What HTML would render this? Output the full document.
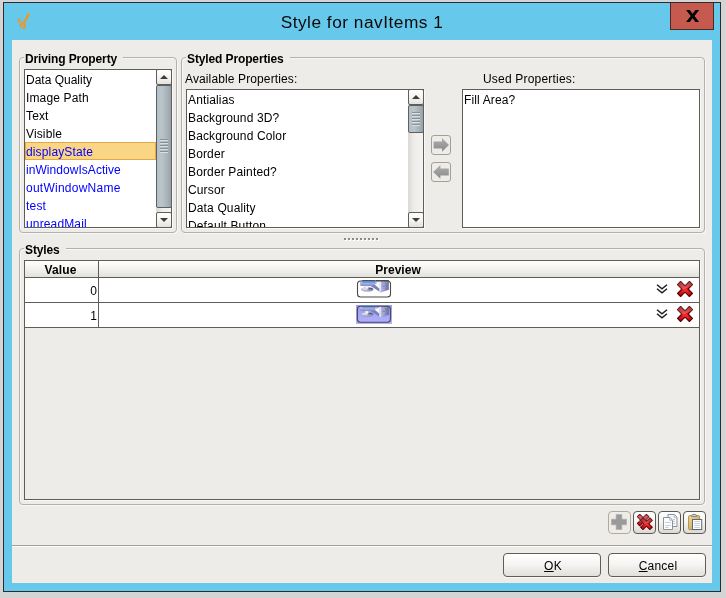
<!DOCTYPE html>
<html>
<head>
<meta charset="utf-8">
<title>Style for navItems 1</title>
<style>
html,body{margin:0;padding:0;}
body{width:726px;height:598px;background:#d4d4d4;position:relative;overflow:hidden;
  font-family:"Liberation Sans",sans-serif;font-size:12px;color:#000;}
div,svg{position:absolute;box-sizing:border-box;}
.it,.lbl,.gt,.btn,#title{will-change:transform;}
#win{left:3px;top:2px;width:718px;height:590px;background:#66c8ea;border:1px solid #2c2c2c;}
#title{left:4px;top:3px;width:716px;height:37px;text-align:center;font-size:17.3px;line-height:38px;letter-spacing:0.5px;color:#0a0a0a;white-space:nowrap;}
#close{left:670px;top:3px;width:44px;height:27px;background:#c65a4f;border:1px solid #4f2823;border-top:none;}
#content{left:12px;top:40px;width:700px;height:543px;background:#eeece8;}
.grp{border:1px solid #b3b1ac;border-radius:4px;box-shadow:inset 1px 1px 0 #f8f7f5, 1px 1px 0 #f8f7f5;}
.gt{font-weight:bold;background:#eeece8;white-space:nowrap;line-height:14px;height:14px;padding:0 6px 0 1px;letter-spacing:-0.12px;}
.list{background:#fff;border:1px solid #5f5d57;overflow:hidden;box-shadow:1px 1px 0 #faf9f7;}
.it{left:0;height:18px;line-height:20px;white-space:nowrap;padding-left:1px;overflow:hidden;letter-spacing:0.14px;}
.lbl{white-space:nowrap;line-height:14px;height:14px;letter-spacing:0.12px;}
.blue{color:#0000ff;}
.sb{background:linear-gradient(90deg,#dad8d3,#eeedea 40%,#f5f4f2);}
.sbtn{width:16px;height:16px;border:1px solid #5f5d57;border-radius:2px;background:linear-gradient(#ffffff,#f4f3f0 55%,#e4e2dd);}
.thumb{width:16px;border:1px solid #5d5f60;border-radius:2px;background:linear-gradient(90deg,#b4c0c7,#b9c4cb 35%,#a9b4ba 70%,#98a2a8);}
.btn{letter-spacing:0.2px;padding-left:2px;border:1px solid #5f5d57;border-radius:4px;background:linear-gradient(#ffffff,#f6f5f2 45%,#e3e0db);text-align:center;box-shadow:0 1px 0 #f8f7f5;}
.tb{width:23px;height:23px;border:1px solid #5a5853;border-radius:4px;background:linear-gradient(#ffffff,#f4f3f0 50%,#dcd9d3);}
.tbd{width:23px;height:23px;border:1px solid #b3aa9c;border-radius:4px;background:#eeece8;}
.hl{height:1px;background:#5f5d57;}
.vl{width:1px;background:#5f5d57;}
</style>
</head>
<body>
<div id="win"></div>
<div id="title">Style for navItems 1</div>
<svg style="left:16px;top:11px" width="16" height="20" viewBox="0 0 16 20"><path d="M13.1 2.9 L7.5 12.2" stroke="#f7931e" stroke-width="2.2" stroke-linecap="round" fill="none"/><path d="M4.4 15.5 A2.3 2.3 0 1 1 7.4 17.1" stroke="#f7931e" stroke-width="1.9" fill="none" stroke-linecap="round"/><path d="M2.7 8.7 L3.8 10.6" stroke="#f7931e" stroke-width="2.3" stroke-linecap="round"/><ellipse cx="13.3" cy="2.9" rx="0.9" ry="0.5" fill="#f9b45c"/><circle cx="6.3" cy="15.5" r="0.55" fill="#f7931e"/></svg>
<div id="close"><svg style="left:15px;top:7px" width="13.2" height="12" viewBox="0 0 13.2 12"><path d="M0 0 H3.7 L6.6 3.8 L9.5 0 H13.2 L8.5 6 L13.2 12 H9.5 L6.6 8.2 L3.7 12 H0 L4.7 6 Z" fill="#050505"/></svg></div>
<div id="content"></div>

<div class="grp" style="left:19px;top:57px;width:158px;height:176px"></div>
<div class="gt" style="left:24.4px;top:52px">Driving Property</div>
<div class="list" style="left:24px;top:69px;width:148px;height:159px"></div>
<div class="it " style="left:25px;top:70px;width:131px"><span style="letter-spacing:0">Data Quality</span></div>
<div class="it " style="left:25px;top:88px;width:131px">Image Path</div>
<div class="it " style="left:25px;top:106px;width:131px">Text</div>
<div class="it " style="left:25px;top:124px;width:131px">Visible</div>
<div style="left:25px;top:142px;width:131px;height:18px;background:#fad583;border:1px solid #e0a94a"></div>
<div class="it blue" style="left:25px;top:142px;width:131px">displayState</div>
<div class="it blue" style="left:25px;top:160px;width:131px"><span style="letter-spacing:0.05px">inWindowIsActive</span></div>
<div class="it blue" style="left:25px;top:178px;width:131px"><span style="letter-spacing:0.25px">outWindowName</span></div>
<div class="it blue" style="left:25px;top:196px;width:131px"><span style="letter-spacing:0.2px">test</span></div>
<div class="it blue" style="left:25px;top:214px;width:131px;height:13px">unreadMail</div>
<div class="sb" style="left:156px;top:70px;width:15px;height:157px"></div>
<div class="sbtn" style="left:156px;top:69px"></div>
<svg style="left:160px;top:75px" width="8" height="4" viewBox="0 0 8 4"><path d="M0 4 L4 0 L8 4 Z" fill="#403e3a"/></svg>
<div class="thumb" style="left:156px;top:85px;height:123px"></div>
<svg style="left:160px;top:139px" width="8" height="14" viewBox="0 0 8 14"><rect x="0" y="0" width="8" height="1" fill="#879197"/><rect x="0" y="1" width="8" height="1" fill="#d6dee3"/><rect x="0" y="3" width="8" height="1" fill="#879197"/><rect x="0" y="4" width="8" height="1" fill="#d6dee3"/><rect x="0" y="6" width="8" height="1" fill="#879197"/><rect x="0" y="7" width="8" height="1" fill="#d6dee3"/><rect x="0" y="9" width="8" height="1" fill="#879197"/><rect x="0" y="10" width="8" height="1" fill="#d6dee3"/><rect x="0" y="12" width="8" height="1" fill="#879197"/><rect x="0" y="13" width="8" height="1" fill="#d6dee3"/></svg>
<div class="sbtn" style="left:156px;top:212px"></div>
<svg style="left:160px;top:218px" width="8" height="4" viewBox="0 0 8 4"><path d="M0 0 L4 4 L8 0 Z" fill="#403e3a"/></svg>

<div class="grp" style="left:181px;top:57px;width:524px;height:176px"></div>
<div class="gt" style="left:186.4px;top:52px">Styled Properties</div>
<div class="lbl" style="left:185px;top:72px">Available Properties:</div>
<div class="list" style="left:186px;top:89px;width:238px;height:139px"></div>
<div class="it " style="left:187px;top:90px;width:220px">Antialias</div>
<div class="it " style="left:187px;top:108px;width:220px">Background 3D?</div>
<div class="it " style="left:187px;top:126px;width:220px">Background Color</div>
<div class="it " style="left:187px;top:144px;width:220px">Border</div>
<div class="it " style="left:187px;top:162px;width:220px">Border Painted?</div>
<div class="it " style="left:187px;top:180px;width:220px">Cursor</div>
<div class="it " style="left:187px;top:198px;width:220px">Data Quality</div>
<div class="it" style="left:187px;top:216px;width:220px;height:11px">Default Button</div>
<div class="sb" style="left:408px;top:90px;width:15px;height:137px"></div>
<div class="sbtn" style="left:408px;top:89px"></div>
<svg style="left:412px;top:95px" width="8" height="4" viewBox="0 0 8 4"><path d="M0 4 L4 0 L8 4 Z" fill="#403e3a"/></svg>
<div class="thumb" style="left:408px;top:105px;height:28px"></div>
<svg style="left:412px;top:112px" width="8" height="14" viewBox="0 0 8 14"><rect x="0" y="0" width="8" height="1" fill="#879197"/><rect x="0" y="1" width="8" height="1" fill="#d6dee3"/><rect x="0" y="3" width="8" height="1" fill="#879197"/><rect x="0" y="4" width="8" height="1" fill="#d6dee3"/><rect x="0" y="6" width="8" height="1" fill="#879197"/><rect x="0" y="7" width="8" height="1" fill="#d6dee3"/><rect x="0" y="9" width="8" height="1" fill="#879197"/><rect x="0" y="10" width="8" height="1" fill="#d6dee3"/><rect x="0" y="12" width="8" height="1" fill="#879197"/><rect x="0" y="13" width="8" height="1" fill="#d6dee3"/></svg>
<div class="sbtn" style="left:408px;top:212px"></div>
<svg style="left:412px;top:218px" width="8" height="4" viewBox="0 0 8 4"><path d="M0 0 L4 4 L8 0 Z" fill="#403e3a"/></svg>

<div style="left:431px;top:135px;width:20px;height:20px;border:1px solid #a79f93;border-radius:3px"></div>
<svg style="left:431px;top:135px" width="21" height="21" viewBox="0 0 21 21"><defs><linearGradient id="ag" x1="0" y1="0" x2="0" y2="1"><stop offset="0.15" stop-color="#a9a9a9"/><stop offset="0.85" stop-color="#8f8f8f"/></linearGradient></defs><path d="M2.6 6.4 H11 V3 L18 10 L11 16.8 V13.4 H2.6 Z" fill="url(#ag)"/></svg>
<div style="left:431px;top:162px;width:20px;height:20px;border:1px solid #a79f93;border-radius:3px"></div>
<svg style="left:431px;top:162px" width="21" height="21" viewBox="0 0 21 21"><path d="M17.8 6.4 H9.4 V3 L2.2 10 L9.4 16.8 V13.4 H17.8 Z" fill="url(#ag)"/></svg>

<div class="lbl" style="left:482.5px;top:72px;letter-spacing:0.2px">Used Properties:</div>
<div class="list" style="left:462px;top:89px;width:238px;height:139px"></div>
<div class="it " style="left:463px;top:90px;width:200px">Fill Area?</div>

<svg style="left:344px;top:238px" width="36" height="4" viewBox="0 0 36 4"><rect x="1" y="1" width="2" height="2" fill="#ffffff"/><rect x="0" y="0" width="2" height="2" fill="#8b8b89"/><rect x="5" y="1" width="2" height="2" fill="#ffffff"/><rect x="4" y="0" width="2" height="2" fill="#8b8b89"/><rect x="9" y="1" width="2" height="2" fill="#ffffff"/><rect x="8" y="0" width="2" height="2" fill="#8b8b89"/><rect x="13" y="1" width="2" height="2" fill="#ffffff"/><rect x="12" y="0" width="2" height="2" fill="#8b8b89"/><rect x="17" y="1" width="2" height="2" fill="#ffffff"/><rect x="16" y="0" width="2" height="2" fill="#8b8b89"/><rect x="21" y="1" width="2" height="2" fill="#ffffff"/><rect x="20" y="0" width="2" height="2" fill="#8b8b89"/><rect x="25" y="1" width="2" height="2" fill="#ffffff"/><rect x="24" y="0" width="2" height="2" fill="#8b8b89"/><rect x="29" y="1" width="2" height="2" fill="#ffffff"/><rect x="28" y="0" width="2" height="2" fill="#8b8b89"/><rect x="33" y="1" width="2" height="2" fill="#ffffff"/><rect x="32" y="0" width="2" height="2" fill="#8b8b89"/></svg>

<div class="grp" style="left:19px;top:248px;width:686px;height:257px"></div>
<div class="gt" style="left:24.4px;top:243px">Styles</div>
<div class="list" style="left:24px;top:260px;width:676px;height:240px;background:#eeece8"></div>
<div style="left:25px;top:261px;width:674px;height:16px;background:linear-gradient(#ffffff,#f3f2ef 50%,#e3e1dc)"></div>
<div class="hl" style="left:25px;top:277px;width:674px"></div>
<div style="left:25px;top:278px;width:674px;height:24px;background:#fff"></div>
<div class="hl" style="left:25px;top:302px;width:674px"></div>
<div style="left:25px;top:303px;width:674px;height:24px;background:#fff"></div>
<div class="hl" style="left:25px;top:327px;width:674px"></div>
<div class="vl" style="left:98px;top:261px;height:66px"></div>
<div class="gt" style="left:24px;top:263px;width:73px;text-align:center;background:none;padding:0;letter-spacing:0.15px">Value</div>
<div class="gt" style="left:98px;top:263px;width:600px;text-align:center;background:none;padding:0;letter-spacing:0.05px">Preview</div>
<div class="lbl" style="left:25px;top:284px;width:72px;text-align:right">0</div>
<div class="lbl" style="left:25px;top:309px;width:72px;text-align:right">1</div>

<div style="left:357px;top:280px;width:34px;height:18px;overflow:hidden"><svg style="left:0px;top:0px" width="34" height="18" viewBox="0 0 34 18">
<defs><linearGradient id="p0m" x1="0" y1="0" x2="0" y2="1"><stop offset="0" stop-color="#c6c9f0"/><stop offset="1" stop-color="#8488c4"/></linearGradient>
<linearGradient id="p0t" x1="0" y1="0" x2="1" y2="0"><stop offset="0" stop-color="#b6b8e4"/><stop offset="0.5" stop-color="#8e91c6"/><stop offset="1" stop-color="#666aa4"/></linearGradient>
<radialGradient id="p0b" cx="35%" cy="40%" r="70%"><stop offset="0" stop-color="#f4f4f8"/><stop offset="0.6" stop-color="#a8aac4"/><stop offset="1" stop-color="#7c7fa8"/></radialGradient></defs>
<rect x="18.6" y="0" width="13.2" height="1.2" fill="#4a4c74"/>
<path d="M2.6 1.6 H19.9 L19.4 6 H3.6 Z" fill="url(#p0m)"/>
<rect x="5.2" y="0" width="13" height="1.2" fill="#1a66cc"/>
<rect x="5.2" y="1.8" width="13" height="1.3" fill="#58acf6"/>
<ellipse cx="10.3" cy="9.3" rx="6.3" ry="2.3" fill="url(#p0b)"/>
<ellipse cx="13" cy="8.7" rx="2.9" ry="0.85" fill="#5a5e7a"/>
<path d="M8.2 6 H11.2 L11.2 8.9 H8.2 Z" fill="#fafafd" stroke="#b4b6d8" stroke-width="0.5"/>
<path d="M13.6 6 L19.6 5.6 L22.4 2 V11.6 L23.9 12.5 V9 Z" fill="#9496cc"/>
<path d="M13.6 6 L23.9 12.6 V9.6 L18 5.4 Z" fill="#7c80ba"/>
<path d="M17.6 4.6 L22.3 2.4 V8.4 Z" fill="#fbfbfe"/>
<path d="M22.3 1 H23.9 V12.5 L22.3 11.5 Z" fill="#eeeff9"/>
<path d="M23.9 1 H31.8 V9.7 L23.9 12.5 Z" fill="url(#p0t)"/>
<path d="M25.3 4.3 H27.9 M25.3 5.9 H27.9 M25.3 7.4 H27.9 M25.3 8.9 H27.6" stroke="#d4d6f0" stroke-width="0.7"/>
<path d="M25.3 4.9 H27.9 M25.3 6.5 H27.9 M25.3 8 H27.9" stroke="#5a5e96" stroke-width="0.5"/>
<rect x="28.7" y="2.1" width="1.4" height="0.9" fill="#5ee040"/>
</svg></div>
<svg style="left:355px;top:278px" width="40" height="22" viewBox="0 0 40 22"><rect x="2.5" y="3" width="33" height="16" rx="3" fill="none" stroke="#4c4a45" stroke-width="1.1"/></svg>
<div style="left:356px;top:305px;width:36px;height:19px;background:linear-gradient(#9a9af4,#b2b2fd)"></div>
<div style="left:357px;top:306px;width:34px;height:17px;overflow:hidden"><svg style="left:0px;top:-1px" width="34" height="18" viewBox="0 0 34 18">
<defs><linearGradient id="p1m" x1="0" y1="0" x2="0" y2="1"><stop offset="0" stop-color="#c6c9f0"/><stop offset="1" stop-color="#8488c4"/></linearGradient>
<linearGradient id="p1t" x1="0" y1="0" x2="1" y2="0"><stop offset="0" stop-color="#b6b8e4"/><stop offset="0.5" stop-color="#8e91c6"/><stop offset="1" stop-color="#666aa4"/></linearGradient>
<radialGradient id="p1b" cx="35%" cy="40%" r="70%"><stop offset="0" stop-color="#f4f4f8"/><stop offset="0.6" stop-color="#a8aac4"/><stop offset="1" stop-color="#7c7fa8"/></radialGradient></defs>
<rect x="18.6" y="0" width="13.2" height="1.2" fill="#4a4c74"/>
<path d="M2.6 1.6 H19.9 L19.4 6 H3.6 Z" fill="url(#p1m)"/>
<rect x="5.2" y="0" width="13" height="1.2" fill="#1a66cc"/>
<rect x="5.2" y="1.8" width="13" height="1.3" fill="#58acf6"/>
<ellipse cx="10.3" cy="9.3" rx="6.3" ry="2.3" fill="url(#p1b)"/>
<ellipse cx="13" cy="8.7" rx="2.9" ry="0.85" fill="#5a5e7a"/>
<path d="M8.2 6 H11.2 L11.2 8.9 H8.2 Z" fill="#fafafd" stroke="#b4b6d8" stroke-width="0.5"/>
<path d="M13.6 6 L19.6 5.6 L22.4 2 V11.6 L23.9 12.5 V9 Z" fill="#9496cc"/>
<path d="M13.6 6 L23.9 12.6 V9.6 L18 5.4 Z" fill="#7c80ba"/>
<path d="M17.6 4.6 L22.3 2.4 V8.4 Z" fill="#fbfbfe"/>
<path d="M22.3 1 H23.9 V12.5 L22.3 11.5 Z" fill="#eeeff9"/>
<path d="M23.9 1 H31.8 V9.7 L23.9 12.5 Z" fill="url(#p1t)"/>
<path d="M25.3 4.3 H27.9 M25.3 5.9 H27.9 M25.3 7.4 H27.9 M25.3 8.9 H27.6" stroke="#d4d6f0" stroke-width="0.7"/>
<path d="M25.3 4.9 H27.9 M25.3 6.5 H27.9 M25.3 8 H27.9" stroke="#5a5e96" stroke-width="0.5"/>
<rect x="28.7" y="2.1" width="1.4" height="0.9" fill="#5ee040"/>
</svg></div>
<svg style="left:355px;top:303px" width="40" height="22" viewBox="0 0 40 22"><rect x="2.4" y="3.3" width="33" height="16" rx="3" fill="none" stroke="#4c4a45" stroke-width="1.1"/></svg>

<svg style="left:656px;top:284px" width="12" height="11" viewBox="0 0 12 11"><path d="M1 0.8 L6 4.9 L11 0.8 M1 4.8 L6 8.9 L11 4.8" fill="none" stroke="#1e1e1e" stroke-width="1.45"/></svg>
<svg style="left:656px;top:309px" width="12" height="11" viewBox="0 0 12 11"><path d="M1 0.8 L6 4.9 L11 0.8 M1 4.8 L6 8.9 L11 4.8" fill="none" stroke="#1e1e1e" stroke-width="1.45"/></svg>
<svg style="left:677px;top:281px" width="16" height="16" viewBox="0 0 16 16"><defs><radialGradient id="rx0" cx="52%" cy="62%" r="62%"><stop offset="0" stop-color="#ff3232"/><stop offset="0.5" stop-color="#d01218"/><stop offset="1" stop-color="#9a0006"/></radialGradient><clipPath id="rx0c"><path d="M3.6 0.5 L8 4.9 L12.4 0.5 L15.5 3.6 L11.1 8 L15.5 12.4 L12.4 15.5 L8 11.1 L3.6 15.5 L0.5 12.4 L4.9 8 L0.5 3.6 Z"/></clipPath></defs><path d="M3.6 0.5 L8 4.9 L12.4 0.5 L15.5 3.6 L11.1 8 L15.5 12.4 L12.4 15.5 L8 11.1 L3.6 15.5 L0.5 12.4 L4.9 8 L0.5 3.6 Z" fill="url(#rx0)" stroke="#5a0003" stroke-width="1.15" stroke-linejoin="round"/><path d="M0 0 H16 V4 Q8 9 0 9 Z" fill="#ffffff" opacity="0.24" clip-path="url(#rx0c)"/></svg>
<svg style="left:677px;top:306px" width="16" height="16" viewBox="0 0 16 16"><defs><radialGradient id="rx1" cx="52%" cy="62%" r="62%"><stop offset="0" stop-color="#ff3232"/><stop offset="0.5" stop-color="#d01218"/><stop offset="1" stop-color="#9a0006"/></radialGradient><clipPath id="rx1c"><path d="M3.6 0.5 L8 4.9 L12.4 0.5 L15.5 3.6 L11.1 8 L15.5 12.4 L12.4 15.5 L8 11.1 L3.6 15.5 L0.5 12.4 L4.9 8 L0.5 3.6 Z"/></clipPath></defs><path d="M3.6 0.5 L8 4.9 L12.4 0.5 L15.5 3.6 L11.1 8 L15.5 12.4 L12.4 15.5 L8 11.1 L3.6 15.5 L0.5 12.4 L4.9 8 L0.5 3.6 Z" fill="url(#rx1)" stroke="#5a0003" stroke-width="1.15" stroke-linejoin="round"/><path d="M0 0 H16 V4 Q8 9 0 9 Z" fill="#ffffff" opacity="0.24" clip-path="url(#rx1c)"/></svg>

<div class="tbd" style="left:608px;top:511px"></div>
<svg style="left:611px;top:514px" width="16" height="16" viewBox="0 0 16 16"><path d="M5.2 0.4 H10.8 V5.2 H15.6 V10.8 H10.8 V15.6 H5.2 V10.8 H0.4 V5.2 H5.2 Z" fill="#9a9a9a" stroke="#a8a8a8" stroke-width="0.6"/></svg>
<div class="tb" style="left:633px;top:511px"></div>
<svg style="left:637px;top:514px" width="16" height="16" viewBox="0 0 16 16"><defs><radialGradient id="rx2" cx="52%" cy="62%" r="62%"><stop offset="0" stop-color="#ff3232"/><stop offset="0.5" stop-color="#d01218"/><stop offset="1" stop-color="#9a0006"/></radialGradient><clipPath id="rx2c"><path d="M3.6 0.5 L8 4.9 L12.4 0.5 L15.5 3.6 L11.1 8 L15.5 12.4 L12.4 15.5 L8 11.1 L3.6 15.5 L0.5 12.4 L4.9 8 L0.5 3.6 Z"/></clipPath></defs><g transform="translate(0,0) scale(0.76)"><path d="M3.6 0.5 L8 4.9 L12.4 0.5 L15.5 3.6 L11.1 8 L15.5 12.4 L12.4 15.5 L8 11.1 L3.6 15.5 L0.5 12.4 L4.9 8 L0.5 3.6 Z" fill="#c41820" stroke="#640004" stroke-width="1.4" stroke-linejoin="round"/><path d="M0 0 H16 V6 Q8 11 0 11 Z" fill="#ffffff" opacity="0.3" clip-path="url(#rx2c)"/></g><g transform="translate(3.2,3.5) scale(0.78)"><path d="M3.6 0.5 L8 4.9 L12.4 0.5 L15.5 3.6 L11.1 8 L15.5 12.4 L12.4 15.5 L8 11.1 L3.6 15.5 L0.5 12.4 L4.9 8 L0.5 3.6 Z" fill="url(#rx2)" stroke="#640004" stroke-width="1.3" stroke-linejoin="round"/><path d="M0 0 H16 V4 Q8 9 0 9 Z" fill="#ffffff" opacity="0.2" clip-path="url(#rx2c)"/></g></svg>
<div class="tb" style="left:658px;top:511px"></div>
<svg style="left:662px;top:513px" width="17" height="18" viewBox="0 0 17 18"><path d="M6 1.5 H12.3 L15 4.2 V13.5 H6 Z" fill="#f3f6fa" stroke="#8a919c" stroke-width="1"/><path d="M12.2 1.6 V4.3 H14.9" fill="none" stroke="#a8afb9" stroke-width="0.8"/><path d="M10.8 6.5 H13 M10.8 8.5 H13 M10.8 10.5 H13" stroke="#c8ced8" stroke-width="1"/><path d="M1.5 4.5 H7.8 L10.5 7.2 V16.5 H1.5 Z" fill="#fbfcfe" stroke="#8a919c" stroke-width="1"/><path d="M7.7 4.6 V7.3 H10.4" fill="none" stroke="#a8afb9" stroke-width="0.8"/><path d="M3.4 9.5 H8.6" stroke="#b0b6c0" stroke-width="1" stroke-dasharray="1 0.5"/><path d="M3.4 12.5 H8.6 M3.4 14.5 H6.6" stroke="#c4cad4" stroke-width="1"/></svg>
<div class="tb" style="left:683px;top:511px"></div>
<svg style="left:687px;top:513px" width="17" height="18" viewBox="0 0 17 18"><defs><linearGradient id="cb" x1="0" y1="0" x2="1" y2="1"><stop offset="0" stop-color="#f0dca8"/><stop offset="0.5" stop-color="#dcb870"/><stop offset="1" stop-color="#c09040"/></linearGradient></defs><rect x="1.6" y="2.6" width="11" height="14" rx="1.2" fill="url(#cb)" stroke="#a8843c" stroke-width="0.9"/><path d="M4.6 3.4 V2.6 a2.5 1.3 0 0 1 5 0 V3.4 Z" fill="#d4d7dc" stroke="#6c7078" stroke-width="0.8"/><rect x="5.5" y="6.5" width="9.2" height="10" fill="#f9fbfd" stroke="#5f6975" stroke-width="1"/><path d="M7.3 8.5 H12.9 M7.3 10.5 H12.9 M7.3 12.5 H12.9 M7.3 14.5 H12.9" stroke="#c2ccd6" stroke-width="0.9"/></svg>

<div style="left:12px;top:545px;width:700px;height:1px;background:#a3a19b"></div>
<div style="left:12px;top:546px;width:700px;height:1px;background:#fbfaf8"></div>
<div class="btn" style="left:503px;top:553px;width:98px;height:24px;line-height:24px"><u>O</u>K</div>
<div class="btn" style="left:608px;top:553px;width:98px;height:24px;line-height:24px"><u>C</u>ancel</div>
</body>
</html>
